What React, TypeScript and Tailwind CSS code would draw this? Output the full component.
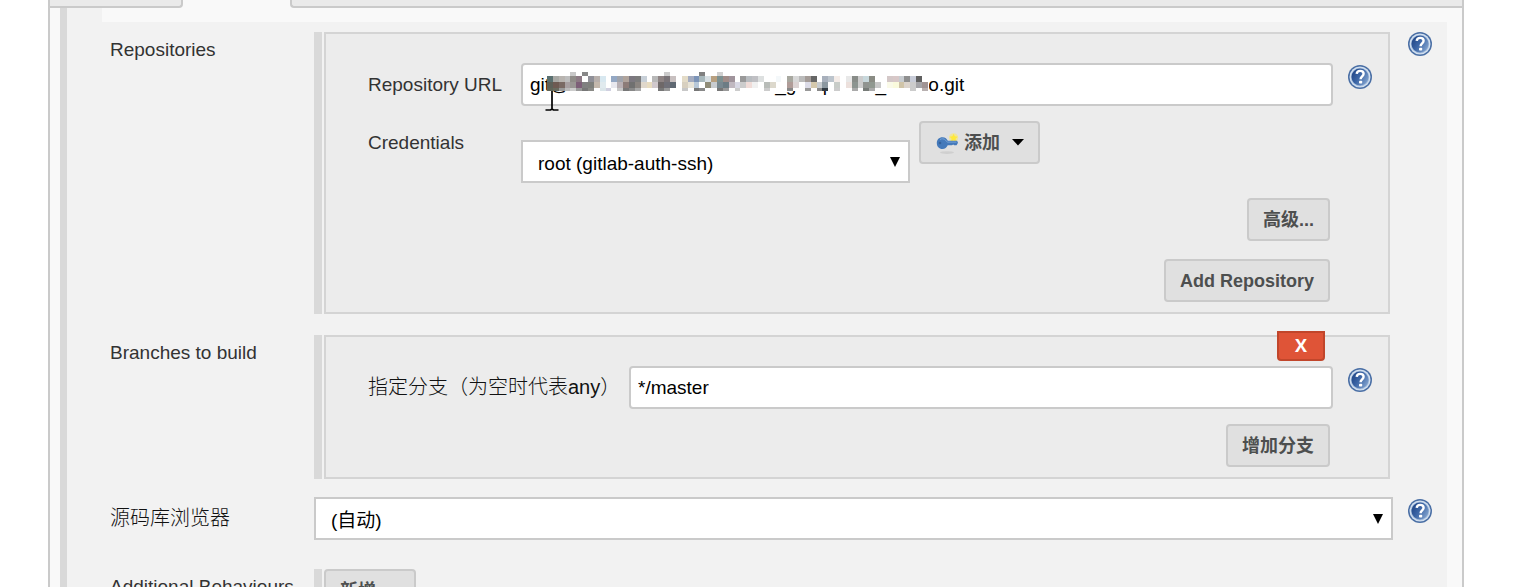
import type { ReactNode } from 'react';

/* Redaction mosaic over the repository address: one entry per column, four rows each. */
const MOSAIC = [
  '-,5a7070,5d6058,606558', '-,a8a8a4,6e5a52,686a5e', '-,b8b4b0,7a6a64,999999', '-,bdbdbd,a8a0a2,bbbbbb',
  'c8c8c8,8f8c88,9a9694,cccccc', '-,8c7a84,7d5f78,999999', '888888,-,808080,777777', '-,909098,7f807c,8a8a86',
  '-,b8b0ac,c4b8ac,-', '-,d8e8f0,e0eaee,dbe6ea', '-,-,-,d0d0e0', '-,94a8c4,e8e8ee,-',
  '-,a0a4ac,b8b0b4,c8c8c8', '-,b0a49c,8c7c78,777777', '-,7c7880,707070,888888', '-,7c7c7c,8a8480,a8a8a8',
  '-,c8d0d8,e0d8cc,-', '-,-,e8dcc0,-', '-,b8b8b8,d0c8cc,-', '-,8e8484,6e6868,777777',
  'cccccc,7a7478,707078,999999', '-,c8c0c0,5f6872,-', '-,-,-,-', '-,e4dcc8,d8d0c0,c8c8c8',
  '-,a4acc0,e8e4d8,-', '-,7c94b8,b8c8d8,777777', '808080,a8b8bc,-,888888', '-,d8e0e4,908c78,-',
  '-,b8a080,c8ccd0,-', 'd0d0d0,7c9090,788890,777777', '-,a08c88,6c7c84,999999', '-,a0949c,c0b8c0,-',
  '-,-,d8d8e4,cccccc', '-,999999,cccccc,-', '-,b8bcc0,f0dcd8,-', '-,c0c0c4,f0f0f0,-',
  '-,dde0e0,-,-', '-,-,b8bcb8,cccccc', '-,-,dcd8cc,-', '-,f4f8fa,-,-',
  '-,-,-,-', '-,a8a8a0,b09c98,888888', '-,d8d8d8,dcd4d4,-', '-,bbbbbb,-,-',
  '-,a49c98,dcdce8,999999', '-,666666,d4c8ac,-', '-,-,c8ccd0,888888', '-,a8b0bc,8c98a0,333c44',
  '-,bcc4cc,-,-', '-,f4ece8,c8ccc8,cccccc', '-,-,-,-', '-,e8e8e8,ece0dc,-',
  '-,888c88,8c9490,aaaaaa', '-,cccccc,cccccc,-', '-,c8d8dc,909490,777c78', '-,8a8c84,909890,aaaaaa',
  '-,-,c8c8c8,-', '-,-,-,-', '-,d4c8c8,fafae8,-', '-,d8c8c8,fafadc,-',
  '-,c8ccd0,d0c4a8,-', '-,8f8f8f,dcd4cc,-', '-,c8ccd8,cccccc,cccccc', '-,606060,a4a4a8,-',
  '-,-,a09494,b8b0b0',
];
const MOSAIC_ROWS = [
  { y: 1, h: 4 },
  { y: 5, h: 6 },
  { y: 11, h: 6 },
  { y: 17, h: 3 },
];
const MOSAIC_STEP = 5.86;

function Mosaic() {
  return (
    <svg viewBox="0 0 382 20" shapeRendering="crispEdges" className="pointer-events-none absolute top-2 left-[26px] h-5 w-[382px]">
      <rect width="382" height="20" fill="#fff" />
      {MOSAIC.flatMap((column, i) =>
        column.split(',').map((color, j) =>
          color === '-' ? null : (
            <rect key={`${i}-${j}`} x={i * MOSAIC_STEP} y={MOSAIC_ROWS[j].y} width={MOSAIC_STEP} height={MOSAIC_ROWS[j].h} fill={`#${color}`} />
          ),
        ),
      )}
    </svg>
  );
}

function TextCursor() {
  return (
    <svg viewBox="0 0 14 20" className="pointer-events-none absolute top-[28px] left-[24px] h-5 w-[14px]">
      <path d="M7 0v18M0.5 19h5l1.5-1 1.5 1h5" fill="none" stroke="#000" strokeWidth="1.7" />
    </svg>
  );
}

function KeyIcon() {
  return (
    <svg viewBox="0 0 24 24" className="mr-[5px] size-6">
      <ellipse cx="12" cy="21.6" rx="7" ry="1.4" fill="#cfcfcf" />
      <circle cx="18.6" cy="6.8" r="4.6" fill="#f6e77c" opacity="0.7" />
      <path d="M18.6 2.8l1.2 2.5 2.800.4-2 2 .4 2.900-2.400-1.400-2.500 1.400.5-2.900-2-2 2.800-.4z" fill="#ffe93b" />
      <path d="M7.500 6.200c2.800 0 4.400 1.500 5.300 3.600h9.300l.9 2-1.400 2.500h-2.400l-1-.7-1.200.7h-4.300c-1 2.200-2.700 3.700-5.200 3.700C4 18 1.800 15.500 1.800 12S4 6.200 7.500 6.200z" fill="#4479ba" />
      <path d="M5 8.500c1.500-1 4.200-1 5.500.6 1 1.300 1.400 2 2 2h9" fill="none" stroke="#76a2d6" strokeWidth="1" />
      <circle cx="5" cy="12" r="1.300" fill="#34609a" />
    </svg>
  );
}

function Help({ topic, className = '' }: { topic: string; className?: string }) {
  return (
    <button type="button" aria-label={`Help: ${topic}`} className={`size-6 shrink-0 ${className}`}>
      <svg viewBox="0 0 24 24" className="size-6">
        <defs>
          <linearGradient id="help" x1="0" y1="0.2" x2="1" y2="0.8">
            <stop offset="0" stopColor="#1f4485" />
            <stop offset="0.45" stopColor="#3c66a6" />
            <stop offset="1" stopColor="#86a6d0" />
          </linearGradient>
        </defs>
        <circle cx="12" cy="12" r="12" fill="#4a6fa5" />
        <circle cx="12" cy="12" r="10.500" fill="#d3e0ef" />
        <circle cx="12" cy="12" r="9.200" fill="#a3bcdc" />
        <circle cx="12" cy="12" r="8.500" fill="url(#help)" />
        <path d="M8.700 8.900C8.900 7 10.300 5.900 12.200 5.900s3.400 1.100 3.400 2.900c0 2.400-3 2.700-3 5.400" fill="none" stroke="#fff" strokeWidth="2.400" />
        <rect x="11" y="15.700" width="3.200" height="2.900" rx="0.800" fill="#fff" />
      </svg>
    </button>
  );
}

function Button({ children, className = '' }: { children: ReactNode; className?: string }) {
  return (
    <button
      type="button"
      className={`flex h-[43px] shrink-0 items-center rounded-[4px] border-2 border-[#cacaca] bg-[#e0e0e0] px-[14px] text-[18px] font-bold text-[#4d4f4f] ${className}`}
    >
      {children}
    </button>
  );
}

function Caret() {
  return (
    <svg viewBox="0 0 12 7" className="ml-3 h-[7px] w-3">
      <path d="M0 0h12L6 6.600z" fill="#000" />
    </svg>
  );
}

function Select({ id, option, className = '' }: { id: string; option: string; className?: string }) {
  return (
    <div className={`relative ${className}`}>
      <select
        id={id}
        className="h-[43px] w-full appearance-none border-2 border-[#cacaca] bg-white px-[15px] pt-[5px] text-[19px] text-black"
      >
        <option>{option}</option>
      </select>
      <svg viewBox="0 0 10 10" className="pointer-events-none absolute top-[17px] right-[10px] size-[10px]">
        <path d="M0 0h10L5 10z" fill="#000" />
      </svg>
    </div>
  );
}

function Bar() {
  return <div className="mr-[2px] w-2 shrink-0 bg-[#d9d9d9]" />;
}

function Block({ children }: { children: ReactNode }) {
  return (
    <div className="mr-[3px] flex flex-1">
      <Bar />
      <div className="relative flex-1 border-2 border-[#d4d4d4] bg-[#ececec] pt-[29px] pr-4 pb-[10px] pl-[42px]">{children}</div>
    </div>
  );
}

const inputStyle = 'h-[43px] w-full min-w-0 rounded-[4px] border-2 border-[#cacaca] bg-white px-[7px] text-[19px] text-black';
const headingStyle = 'w-[204px] shrink-0 pt-[6px]';

const address = ['git@', ' '.repeat(39), '_g', ' '.repeat(5), 'p', ' '.repeat(8), '_', ' '.repeat(8), 'o.git'].join('');

export default function App() {
  return (
    <div className="h-screen overflow-hidden bg-white font-['Liberation_Sans','Noto_Sans_CJK_SC',sans-serif] text-[19px] leading-6 text-[#333]">
      <main className="mr-16 ml-12 min-h-full border-x-2 border-[#cacaca] bg-[#f9f9f9]">
        <div className="flex h-2">
          <div className="w-[133px] rounded-br-[4px] border-r-2 border-b-2 border-[#cacaca] bg-[#eaeaea]" />
          <div className="w-[107px]" />
          <div className="flex-1 rounded-bl-[4px] border-b-2 border-l-2 border-[#cacaca] bg-[#eaeaea]" />
        </div>
        <div className="mr-[15px] ml-[10px] flex">
          <div className="w-[7px] bg-[#d9d9d9]" />
          <form className="min-w-0 flex-1 bg-[#f2f2f2]">
            <div className="ml-[35px] h-[14px] bg-[#f9f9f9]" />
            <div className="pt-[10px] pr-[15px] pb-6 pl-[43px]">
              <section className="flex items-start">
                <h2 className={headingStyle}>Repositories</h2>
                <Block>
                  <div className="flex items-start">
                    <label htmlFor="url" className="w-[153px] shrink-0 leading-[43px]">Repository URL</label>
                    <div className="relative flex-1">
                      <input id="url" className={inputStyle} defaultValue={address} />
                      <Mosaic />
                      <TextCursor />
                    </div>
                    <Help topic="Repository URL" className="mt-[2px] ml-[15px]" />
                  </div>
                  <div className="mt-[15px] flex h-[63px] items-start">
                    <label htmlFor="credentials" className="w-[153px] shrink-0 leading-[43px]">Credentials</label>
                    <Select id="credentials" option="root (gitlab-auth-ssh)" className="mt-[19px] mr-[9px] w-[389px]" />
                    <Button>
                      <KeyIcon />
                      添加
                      <Caret />
                    </Button>
                  </div>
                  <div className="mt-[14px] mr-[42px] flex flex-col items-end gap-[18px]">
                    <Button>高级...</Button>
                    <Button>Add Repository</Button>
                  </div>
                </Block>
                <Help topic="Repositories" className="ml-[15px]" />
              </section>

              <section className="mt-[21px] flex items-start">
                <h2 className={headingStyle}>Branches to build</h2>
                <Block>
                  <button
                    type="button"
                    className="absolute -top-[6px] right-[63px] h-[30px] w-12 rounded-b-[4px] border-2 border-[#c1462b] bg-[#df5437] pb-[2px] font-['Open_Sans',sans-serif] text-[18px] leading-6 font-bold text-white"
                  >
                    X
                  </button>
                  <div className="flex items-start">
                    <label htmlFor="branch" className="w-[261px] shrink-0 text-[20px] leading-[43px] font-light text-[#111]">指定分支（为空时代表any）</label>
                    <div className="flex-1">
                      <input id="branch" className={inputStyle} defaultValue="*/master" />
                    </div>
                    <Help topic="指定分支" className="mt-[2px] ml-[15px]" />
                  </div>
                  <div className="mt-[15px] mr-[42px] flex justify-end">
                    <Button>增加分支</Button>
                  </div>
                </Block>
                <div className="ml-[15px] w-6 shrink-0" />
              </section>

              <section className="mt-[18px] flex items-start">
                <label htmlFor="browser" className="w-[204px] shrink-0 text-[20px] leading-[43px] font-light text-[#111]">源码库浏览器</label>
                <Select id="browser" option="(自动)" className="flex-1" />
                <Help topic="源码库浏览器" className="mt-[2px] ml-[15px]" />
              </section>

              <section className="mt-[29px] flex items-stretch">
                <h2 className={headingStyle}>Additional Behaviours</h2>
                <Bar />
                <Button>
                  新增
                  <Caret />
                </Button>
              </section>
            </div>
          </form>
        </div>
      </main>
    </div>
  );
}
